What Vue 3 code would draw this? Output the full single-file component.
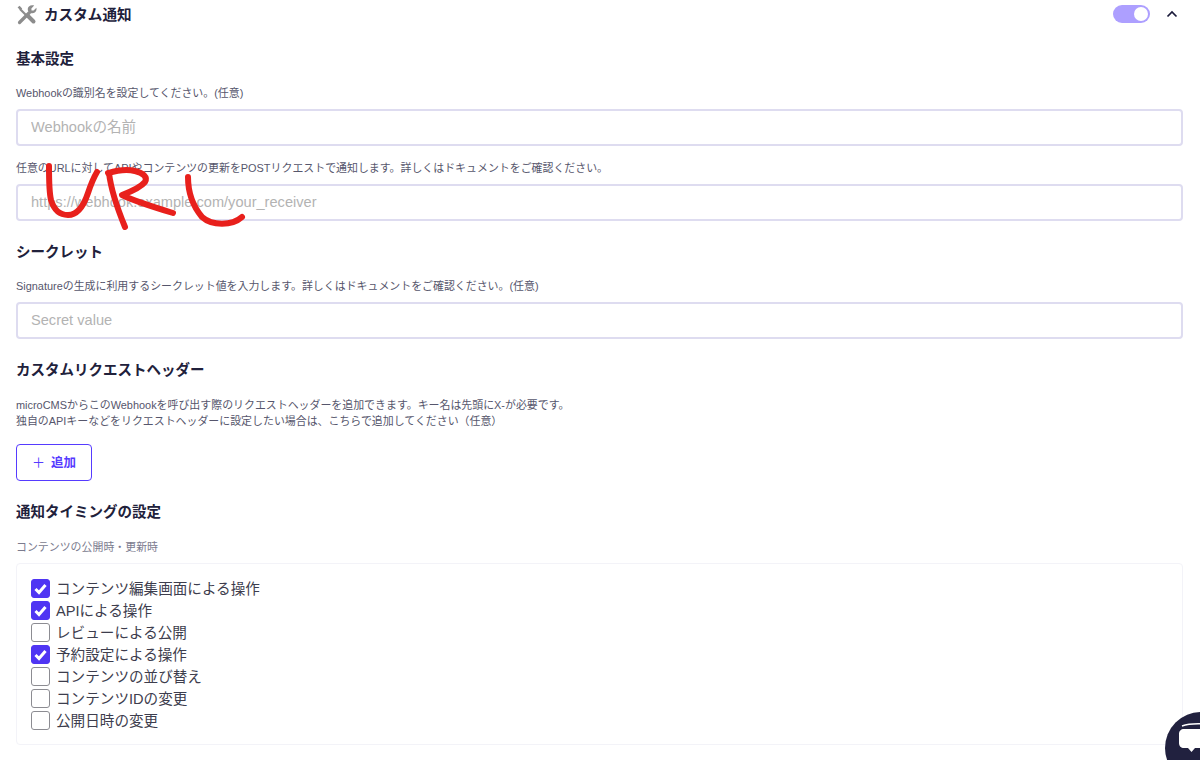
<script setup>
const timings = [
  { label: 'コンテンツ編集画面による操作', on: true },
  { label: 'APIによる操作', on: true },
  { label: 'レビューによる公開', on: false },
  { label: '予約設定による操作', on: true },
  { label: 'コンテンツの並び替え', on: false },
  { label: 'コンテンツIDの変更', on: false },
  { label: '公開日時の変更', on: false },
]
</script>

<template>
  <div class="page">
    <header class="top">
      <svg class="tools" width="20" height="20" viewBox="0 0 20 20" fill="#8c8c8c">
        <path d="M2.500 17.500 12.500 7.500" stroke="#8c8c8c" stroke-width="3.200" stroke-linecap="round" fill="none"/>
        <path d="M17.200.6 14.400 3.400l.1 2.100 2.100.1 2.800-2.800c.4 2-.2 3.700-1.600 4.700-1.300.9-3 1-4.300.4L11 5.700c-.5-1.500-.2-3.200 1-4.300 1.300-1.200 3.200-1.500 5.200-.8z"/>
        <path d="M3 4 10.500 11.500" stroke="#8c8c8c" stroke-width="2.200" fill="none"/>
        <path d="M10.500 10.500 16.500 16.500" stroke="#8c8c8c" stroke-width="4" stroke-linecap="round" fill="none"/>
        <path d="M.6 2.500 2.500.7 5.200 3.400 3.400 5.200z"/>
      </svg>
      <span class="top-title">カスタム通知</span>
      <span class="spacer"></span>
      <span class="toggle"><span class="knob"></span></span>
      <svg class="chev" width="14" height="10" viewBox="0 0 14 10" fill="none">
        <path d="M2.500 7.500 7 3l4.500 4.500" stroke="#1a1a3a" stroke-width="1.700"/>
      </svg>
    </header>

    <h2 class="h first">基本設定</h2>
    <p class="desc d1">Webhookの識別名を設定してください。(任意)</p>
    <input class="field" placeholder="Webhookの名前" />
    <p class="desc d2">任意のURLに対してAPIやコンテンツの更新をPOSTリクエストで通知します。詳しくはドキュメントをご確認ください。</p>
    <input class="field" placeholder="https://webhook.example.com/your_receiver" />

    <h2 class="h next">シークレット</h2>
    <p class="desc d1">Signatureの生成に利用するシークレット値を入力します。詳しくはドキュメントをご確認ください。(任意)</p>
    <input class="field" placeholder="Secret value" />

    <h2 class="h next">カスタムリクエストヘッダー</h2>
    <p class="desc d3">microCMSからこのWebhookを呼び出す際のリクエストヘッダーを追加できます。キー名は先頭にX-が必要です。<br />独自のAPIキーなどをリクエストヘッダーに設定したい場合は、こちらで追加してください（任意）</p>
    <button class="add"><span class="plus">＋</span>追加</button>

    <h2 class="h next">通知タイミングの設定</h2>
    <p class="desc d4">コンテンツの公開時・更新時</p>
    <div class="box">
      <label v-for="t in timings" :key="t.label" class="row">
        <span class="check" :class="{ on: t.on }">
          <svg v-if="t.on" width="19" height="19" viewBox="0 0 19 19" fill="none">
            <path d="M4.500 10 8 13.500 14.500 6" stroke="#fff" stroke-width="3"/>
          </svg>
        </span>
        <span class="label">{{ t.label }}</span>
      </label>
    </div>

    <svg class="scribble" width="260" height="80" viewBox="40 160 260 80" fill="none">
      <g stroke="#e8201c" stroke-width="6" stroke-linecap="round" stroke-linejoin="round">
        <path d="M49 166C49 180 49 192 51 200C54 210 60 215 68 215C78 215 84 205 88 193C91 184 94 177 97 172"/>
        <path d="M109 173C111 190 118 210 125 227"/>
        <path d="M108 173C118 170 128 169 135 171C143 173 148 177 145 182C140 188 130 192 122 195C130 199 150 206 173 213"/>
        <path d="M188 177C188 190 192 205 202 217C212 226 232 226 242 217"/>
      </g>
    </svg>

    <button class="chat" aria-label="chat">
      <svg width="44" height="44" viewBox="0 0 44 44" fill="none">
        <path d="M4 6C12 3 28 3 38 6" stroke="#fff" stroke-width="1.400"/>
        <path d="M6 9h30c3 0 5 2 5 5v9c0 3-2 5-5 5H17l-3.500 4-3.500-4H6c-3 0-5-2-5-5v-9c0-3 2-5 5-5z" fill="#fff"/>
      </svg>
    </button>
  </div>
</template>

<style>
html, body { margin: 0; background: #fff; }
</style>

<style scoped>
.page {
  position: relative;
  width: 1200px;
  height: 760px;
  overflow: hidden;
  box-sizing: border-box;
  padding: 4px 17px 0 16px;
  font-family: Inter, "Noto Sans CJK JP", sans-serif;
  color: #21213b;
  background: #fff;
}
.top { display: flex; align-items: center; height: 20px; }
.tools { margin: 1px 7px 0 1px; }
.top-title { font-size: 14.600px; font-weight: 700; color: #21213b; padding-bottom: 2px; }
.spacer { flex: 1; }
.toggle {
  width: 37px; height: 18px; border-radius: 9px; background: #ad9fff;
  position: relative; display: block; margin-right: 15px;
}
.knob {
  position: absolute; right: 2px; top: 2px; width: 14px; height: 14px;
  border-radius: 50%; background: #fff;
}
.chev { margin-right: 4px; }
.h { margin: 0; font-size: 14.500px; line-height: 20px; font-weight: 700; color: #21213b; }
.first { margin-top: 25px; }
.next { margin-top: 21px; }
.desc {
  margin: 0; font: 10.930px/16px "Liberation Sans", "Noto Sans CJK JP", sans-serif; color: #56566c;
}
.d1 { margin-top: 16px; margin-bottom: 8px; }
.d2 { margin-top: 14px; margin-bottom: 8px; }
.d3 { margin-top: 17px; }
.d4 { margin-top: 17px; color: #7b7b8e; }
.field {
  display: block; width: 100%; height: 37px; box-sizing: border-box;
  padding: 0 13px 2px; border: 2px solid #dedcf0; border-radius: 4px;
  font: 14.600px "Liberation Sans", "Noto Sans CJK JP", sans-serif; color: #21213b;
  background: #fff; outline: none;
}
.field::placeholder { color: #b3b3b3; opacity: 1; }
.add {
  display: flex; align-items: center; justify-content: center; gap: 6px;
  width: 76px; height: 37px; margin-top: 15px; padding: 0 0 2px;
  border: 1px solid #563bff; border-radius: 4px; background: #fff;
  color: #563bff; font: 700 12.500px Inter, "Noto Sans CJK JP", sans-serif;
}
.plus { font-size: 13px; font-weight: 400; }
.box {
  margin-top: 8px; height: 182px; box-sizing: border-box;
  padding: 13px 14px 0; border: 1px solid #f3f3f8; border-radius: 4px;
}
.row { display: flex; align-items: center; height: 22px; }
.check {
  width: 19px; height: 19px; box-sizing: border-box; border-radius: 3px;
  border: 1.500px solid #8c8c92; background: #fff; margin-right: 6px; flex: none; display: block;
}
.check.on { background: #4f35f3; border-color: #4f35f3; }
.check.on svg { display: block; margin: -1px; }
.label { font: 14.600px "Liberation Sans", "Noto Sans CJK JP", sans-serif; color: #3d3d4d; padding-bottom: 2px; }
.scribble { position: absolute; left: 40px; top: 160px; pointer-events: none; }
.chat {
  position: absolute; left: 1165px; top: 712px; width: 72px; height: 72px;
  border-radius: 50%; background: #21213f; border: 0; padding: 0;
}
.chat svg { position: absolute; left: 13px; top: 8px; }
</style>
